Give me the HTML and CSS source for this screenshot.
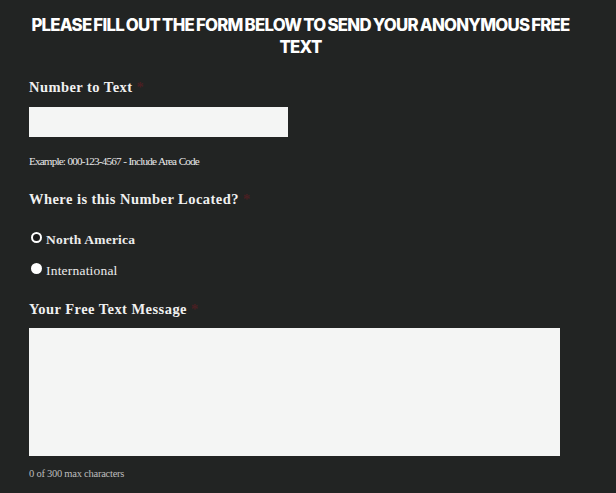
FILE: index.html
```html
<!DOCTYPE html>
<html lang="en">
<head>
<meta charset="utf-8">
<title>Anonymous Free Text</title>
<link rel="stylesheet" href="styles.css">
</head>
<body>
<div class="page">
  <h1 class="title">PLEASE FILL OUT THE FORM BELOW TO SEND YOUR ANONYMOUS FREE TEXT</h1>
  <form class="form">
    <div class="field">
      <label class="label">Number to Text <span class="req">*</span></label>
      <div class="input"></div>
      <div class="hint">Example: 000-123-4567 - Include Area Code</div>
    </div>
    <div class="field">
      <div class="label">Where is this Number Located? <span class="req">*</span></div>
      <div class="radios">
        <div class="radio-row"><span class="radio ring"></span><span class="opt bold">North America</span></div>
        <div class="radio-row"><span class="radio dot"></span><span class="opt">International</span></div>
      </div>
    </div>
    <div class="field last">
      <label class="label">Your Free Text Message <span class="req">*</span></label>
      <div class="textarea"></div>
      <div class="count">0 of 300 max characters</div>
    </div>
  </form>
</div>
</body>
</html>
```
FILE: styles.css
```css
html, body {
  margin: 0;
  padding: 0;
  background: #222423;
}
.page {
  width: 543px;
  padding: 14px 0 0 29px;
  color: #f2f2f2;
}
.title {
  margin: 0 -3px;
  font-family: Inter, "Open Sans", sans-serif;
  font-weight: 800;
  font-size: 16.8px;
  line-height: 22px;
  letter-spacing: -0.75px;
  word-spacing: -1px;
  text-align: center;
  color: #ffffff;
}
.form {
  margin-top: 20px;
}
.label {
  display: block;
  font-family: "Liberation Serif", serif;
  font-weight: bold;
  font-size: 14.5px;
  line-height: 18px;
  letter-spacing: 0.45px;
  color: #f0f0f0;
}
.req {
  color: #4a1f22;
}
.input {
  margin-top: 11px;
  width: 259px;
  height: 30px;
  background: #f4f5f4;
}
.hint {
  margin-top: 16px;
  font-family: "Liberation Serif", serif;
  font-size: 11.2px;
  letter-spacing: -0.85px;
  word-spacing: 0.5px;
  line-height: 16px;
  color: #e8e8e8;
}
.field + .field {
  margin-top: 21px;
}
.field.last {
  margin-top: 20px;
}
.radios {
  margin-top: 23px;
  display: flex;
  flex-direction: column;
  gap: 13px;
}
.radio-row {
  display: flex;
  align-items: flex-start;
  gap: 4px;
  padding-left: 2px;
  height: 18px;
}
.radio {
  box-sizing: border-box;
  width: 11px;
  height: 11px;
  border-radius: 50%;
  margin-top: 1px;
}
.ring {
  border: 2px solid #ffffff;
  background: #1a1a1a;
}
.dot {
  background: #ffffff;
}
.opt {
  font-family: "Liberation Serif", serif;
  font-size: 13.5px;
  line-height: 18px;
  color: #ececec;
  letter-spacing: 0.2px;
}
.opt.bold {
  font-weight: bold;
  font-size: 13.5px;
  letter-spacing: 0.2px;
}
.textarea {
  margin-top: 10px;
  width: 531px;
  height: 128px;
  background: #f4f5f4;
}
.count {
  margin-top: 11px;
  font-family: "Liberation Serif", serif;
  font-size: 10.5px;
  letter-spacing: -0.25px;
  line-height: 14px;
  color: #bdbdbd;
}
```
